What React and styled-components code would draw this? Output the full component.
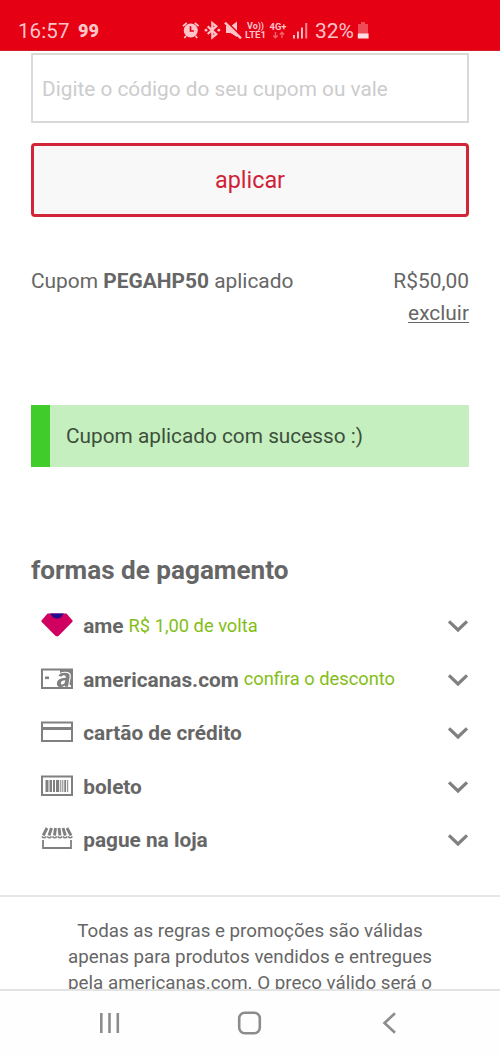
import React from 'react';
import styled, { createGlobalStyle } from 'styled-components';

const Global = createGlobalStyle`
  * { box-sizing: border-box; }
  body { margin: 0; background: #fff; font-family: Roboto, "Liberation Sans", sans-serif; color: #666; }
`;

const Screen = styled.div`
  width: 500px; height: 1056px; overflow: hidden;
  display: flex; flex-direction: column; background: #fff;
`;
const StatusBar = styled.header`
  height: 51px; flex: none; background: #e60014; color: #ffc4c8;
  border-bottom: 1px solid #d4202c;
  display: flex; align-items: flex-start; padding: 20px 0 0 18px;
`;
const Clock = styled.span`
  font-size: 20.5px; line-height: 22px; width: 60px; letter-spacing: 0.1px;
`;
const Carrier = styled.span`
  font-size: 18px; line-height: 21px; font-weight: 900; width: 104px;
`;
const StatusIcons = styled.svg`
  width: 133px; height: 24px; display: block; flex: none;
`;
const Percent = styled.span`
  font-size: 21px; line-height: 22px; width: 42px; white-space: nowrap;
`;
const Battery = styled.svg`
  width: 13px; height: 20px; display: block;
`;
const Content = styled.main`
  flex: 1; min-height: 0; overflow: hidden; display: flex; flex-direction: column;
`;
const Section = styled.section`
  padding: 2px 31px 0; display: flex; flex-direction: column; flex: none; height: 844px;
`;
const CouponInput = styled.input`
  height: 70px; width: 438px; flex: none; border: 2px solid #d9d9d9; border-radius: 0;
  padding: 1px 9px 0; outline: none; background: #fff;
  font: 20.8px Roboto, sans-serif;
  &::placeholder { color: #ccc; opacity: 1; }
`;
const ApplyButton = styled.button`
  margin-top: 20px; height: 74px; flex: none; border: 3px solid #d22638; border-radius: 4px;
  background: #f8f8f8; color: #d11f38; font: 23.4px Roboto, sans-serif;
  padding: 0;
`;
const CouponRow = styled.div`
  margin-top: 49px; height: 64px; display: flex; justify-content: space-between;
  font-size: 20.9px; line-height: 31.5px;
`;
const Amount = styled.div`
  display: flex; flex-direction: column; align-items: flex-end;
`;
const RemoveLink = styled.a`
  text-decoration: underline; text-decoration-thickness: 1px; text-underline-offset: 2px;
`;
const Alert = styled.div`
  margin-top: 75px; height: 62px; flex: none; border-left: 19px solid #40cc2b; background: #c5efbf;
  color: #3d4f3b; padding-left: 16px; font-size: 20.8px; line-height: 62px;
`;
const Heading = styled.h2`
  margin: 87px 0 0; font-size: 26.1px; line-height: 32px; font-weight: 700;
`;
const MethodList = styled.ul`
  list-style: none; margin: 13px 0 0; padding: 0 0 0 10px;
`;
const Method = styled.li`
  height: 53.5px; display: flex; align-items: center;
`;
const MethodIcon = styled.svg`
  width: 32px; height: 26px; margin: -1px 10.2px 0 0; flex: none; color: #808080;
`;
const MethodName = styled.span`
  font-size: 20.8px; font-weight: 700; line-height: 26px; padding-top: 1px;
`;
const MethodNote = styled.span`
  margin-left: 5px; font-size: 18.3px; line-height: 26px; color: #83be15;
`;
const Chevron = styled.svg`
  width: 22px; height: 14px; margin-left: auto; margin-top: 1px;
`;
const Legal = styled.p`
  margin: 0; border-top: 2px solid #e6e6e6; padding: 21px 40px 0; height: 120px; flex: none;
  text-align: center; font-size: 18.75px; line-height: 26.2px;
`;
const NavBar = styled.nav`
  height: 67px; flex: none; border-top: 2px solid #e3e3e3; background: #fefefe;
  display: flex; justify-content: space-between; padding: 19px 97px 0 97px;
`;
const NavIcon = styled.svg`
  width: 26px; height: 26px; fill: none; stroke: #8c8c8c; stroke-width: 2.6;
`;

const icons = {
  ame: (
    <>
      <path d="M7 2.3H25L30.8 9 17.3 22.8Q16 24 14.7 22.8L1.2 9Z" fill="#cf0060" stroke="#cf0060" strokeWidth="1.8" strokeLinejoin="round" />
      <path d="M9 1.5H23L19.7 5.6Q16 7.4 12.3 5.6Z" fill="#220d8c" />
    </>
  ),
  card: (
    <>
      <rect x="1" y="3.5" width="30" height="18.5" fill="#fff" stroke="currentColor" strokeWidth="2" />
      <rect x="4" y="10.5" width="4" height="2.6" fill="currentColor" />
      <path d="M19 3H32V23H19Z" fill="currentColor" />
      <path d="M17 9.8Q18.5 5.7 24 5.7Q30.7 5.7 29.8 11L28.5 17.8Q28.3 19.6 30 19.6V21.5H16Z" fill="#fff" />
      <path d="M17.5 10Q18.7 6.8 23.7 6.8Q29.3 6.8 28.6 11L27 20.8H24L23.7 19.5Q21.5 21.3 19 21Q15.7 20.6 15.9 17.2Q16.3 12 24.8 11.8Q25.2 9.2 23 9.2Q21.3 9.2 20.8 10.6Z" fill="currentColor" />
      <path d="M24.3 14.2Q20 14.4 19.8 17Q19.8 18.8 21.6 18.5Q23.8 18 24.3 14.2Z" fill="#fff" />
      <path d="M14 21H32V23H14Z" fill="currentColor" />
    </>
  ),
  credit: (
    <>
      <rect x="1" y="3.5" width="30" height="18.5" fill="none" stroke="currentColor" strokeWidth="2" />
      <rect x="1" y="8" width="30" height="3" fill="currentColor" />
    </>
  ),
  boleto: (
    <>
      <rect x="1" y="3.5" width="30" height="18.5" fill="none" stroke="currentColor" strokeWidth="2" />
      <path d="M4.5 7h3v12h-3zM8.5 7h2.5v12H8.5zM12 7h2v12h-2zM15 7h3.2v12H15zM19.3 7h1v12h-1zM21.3 7h1v12h-1zM23.3 7h1.8v12h-1.8zM26.2 7h1v12h-1z" fill="currentColor" />
    </>
  ),
  store: (
    <g fill="none" stroke="currentColor">
      <path d="M2 14V22H30V14" strokeWidth="1.8" />
      <path d="M6 2L2.2 9.5M10.5 2L8 9.5M14.5 2L13.5 9.5M18 2L19 9.5M22 2L24.3 9.5M26 2L30 9.5" strokeWidth="2.9" />
      <path d="M0.8 10.5Q3 13 5.2 10.5M6.2 10.5Q8.4 13 10.6 10.5M11.5 10.5Q13.7 13 15.9 10.5M16.7 10.5Q18.9 13 21.1 10.5M21.9 10.5Q24.1 13 26.3 10.5M27 10.5Q29.2 13 31.4 10.5" strokeWidth="1.6" />
    </g>
  ),
};

const methods = [
  { icon: 'ame', name: 'ame', note: 'R$ 1,00 de volta' },
  { icon: 'card', name: 'americanas.com', note: 'confira o desconto' },
  { icon: 'credit', name: 'cartão de crédito' },
  { icon: 'boleto', name: 'boleto' },
  { icon: 'store', name: 'pague na loja' },
];

function StatusGlyphs() {
  return (
    <StatusIcons viewBox="0 0 133 24" fill="#ffc4c8">
      <circle cx="8.8" cy="10.5" r="7" />
      <path d="M1 6.2L4.8 2.8M16.6 6.2L12.8 2.8M4 16L2.3 18M13.6 16L15.3 18" stroke="#ffc4c8" strokeWidth="1.8" />
      <path d="M8.5 6.3V11H12" fill="none" stroke="#e60014" strokeWidth="1.7" />
      <path d="M25.7 6.4L34.3 14.1 30.3 17.4V3L34.3 6.3 25.7 14" fill="none" stroke="#ffc4c8" strokeWidth="2.2" />
      <circle cx="24" cy="10.2" r="1.4" /><circle cx="36.8" cy="10.2" r="1.4" />
      <path d="M44 6H49L55 1.5V17L48.5 13H44Z" />
      <path d="M43.5 1L60 17" stroke="#e60014" strokeWidth="2.2" />
      <path d="M43 2.7L59 18.3" stroke="#ffc4c8" strokeWidth="2.4" />
      <g fontFamily="Roboto, sans-serif" fontWeight="700">
        <text x="65" y="9" fontSize="9.5" textLength="17" lengthAdjust="spacingAndGlyphs">Vo))</text>
        <text x="63" y="18.3" fontSize="9.5" textLength="21" lengthAdjust="spacingAndGlyphs">LTE1</text>
        <text x="87.5" y="9.5" fontSize="9" textLength="17" lengthAdjust="spacingAndGlyphs">4G+</text>
      </g>
      <path d="M93.5 12V17.5M91.3 15.5L93.5 17.8 95.7 15.5M100 18V12.5M97.8 14.5L100 12.2 102.2 14.5" fill="none" stroke="#f4626d" strokeWidth="1.4" />
      <path d="M111 15h1.9v3.5H111zM115 11.5h1.9v7H115zM119 7.5h1.9v11H119z" />
      <path d="M123.3 3h1.9v15.5h-1.9z" fill="#f7909a" />
    </StatusIcons>
  );
}

export default function App() {
  return (
    <Screen>
      <Global />
      <StatusBar>
        <Clock>16:57</Clock>
        <Carrier>99</Carrier>
        <StatusGlyphs />
        <Percent>32%</Percent>
        <Battery viewBox="0 0 13 20">
          <path d="M1 4h3V2h4v2h3v10H1z" fill="#f04a57" />
          <path d="M0.8 13.5h10.8v5H0.8z" fill="#ffe0e2" />
        </Battery>
      </StatusBar>
      <Content>
        <Section>
          <CouponInput placeholder="Digite o código do seu cupom ou vale" />
          <ApplyButton>aplicar</ApplyButton>
          <CouponRow>
            <span>Cupom <b>PEGAHP50</b> aplicado</span>
            <Amount>
              <span>R$50,00</span>
              <RemoveLink>excluir</RemoveLink>
            </Amount>
          </CouponRow>
          <Alert>Cupom aplicado com sucesso :)</Alert>
          <Heading>formas de pagamento</Heading>
          <MethodList>
            {methods.map((m) => (
              <Method key={m.icon}>
                <MethodIcon viewBox="0 0 32 26">{icons[m.icon]}</MethodIcon>
                <MethodName>{m.name}</MethodName>
                {m.note && <MethodNote>{m.note}</MethodNote>}
                <Chevron viewBox="0 0 22 14">
                  <path d="M2 2.3L11 11 20 2.3" fill="none" stroke="#808080" strokeWidth="3.2" />
                </Chevron>
              </Method>
            ))}
          </MethodList>
        </Section>
        <Legal>
          Todas as regras e promoções são válidas<br />
          apenas para produtos vendidos e entregues<br />
          pela americanas.com. O preço válido será o
        </Legal>
      </Content>
      <NavBar>
        <NavIcon viewBox="0 0 26 26"><path d="M4.3 3V23M12.5 3V23M20.8 3V23" /></NavIcon>
        <NavIcon viewBox="0 0 26 26"><rect x="2.2" y="2.7" width="20.6" height="20.6" rx="5.5" /></NavIcon>
        <NavIcon viewBox="0 0 26 26"><path d="M18 3.2L7.5 13 18 22.8" /></NavIcon>
      </NavBar>
    </Screen>
  );
}
